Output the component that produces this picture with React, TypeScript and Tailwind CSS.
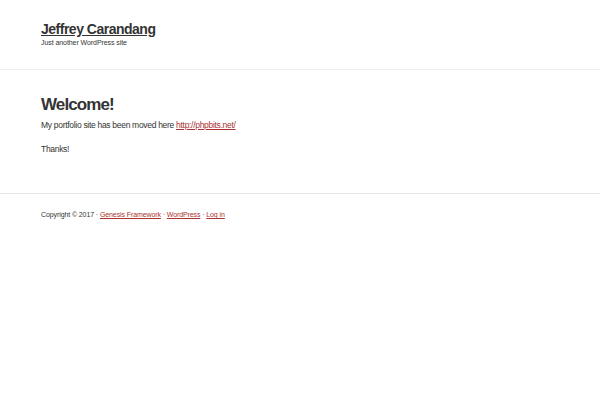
export default function App() {
  return (
    <div className="min-h-[400px] w-[600px] bg-white text-[#333]" style={{ fontFamily: '"Liberation Sans", Arial, sans-serif' }}>
      <header className="border-b border-[#eee] px-[41px] pt-[20px] pb-[22px]">
        <a href="#" className="block text-[14px] font-bold leading-[18px] tracking-[-0.5px] text-[#333] underline">Jeffrey Carandang</a>
        <p className="mt-0 text-[7px] leading-[9px] tracking-[-0.07px] text-[#333]">Just another WordPress site</p>
      </header>
      <main className="border-b border-[#e5e5e5] px-[41px] pt-[25px] pb-[38px]">
        <h1 className="text-[17px] font-bold leading-[20px] tracking-[-0.9px] text-[#333]">Welcome!</h1>
        <p className="mt-[4px] text-[8.5px] leading-[12px] tracking-[-0.3px]">
          My portfolio site has been moved here{" "}
          <a href="#" className="text-[#a33] underline">http://phpbits.net/</a>
        </p>
        <p className="mt-[12px] text-[8.5px] leading-[12px] tracking-[-0.3px]">Thanks!</p>
      </main>
      <footer className="px-[41px] pt-[16px] text-[7px] leading-[10px] tracking-[-0.1px] text-[#333]">
        Copyright © 2017 · <a href="#" className="text-[#a33] underline">Genesis Framework</a> · <a href="#" className="text-[#a33] underline">WordPress</a> · <a href="#" className="text-[#a33] underline">Log in</a>
      </footer>
    </div>
  );
}
